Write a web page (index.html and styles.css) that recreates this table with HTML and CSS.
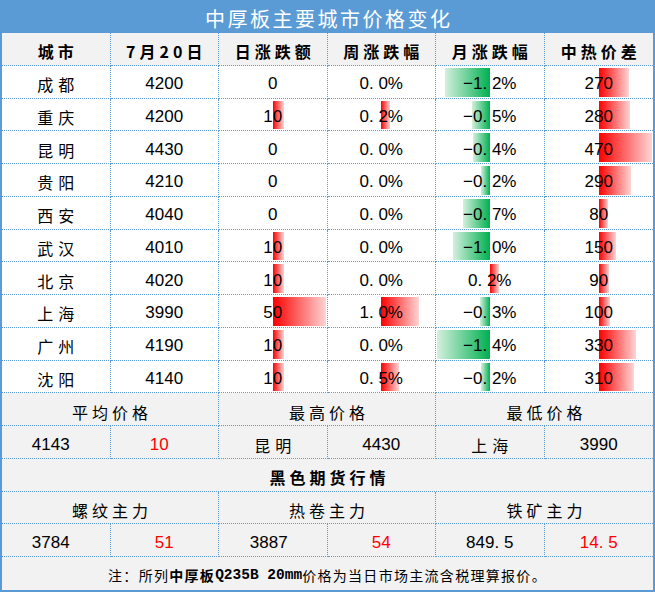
FILE: index.html
```html
<!DOCTYPE html>
<html lang="zh-CN">
<head>
<meta charset="utf-8">
<title>中厚板主要城市价格变化</title>
<link rel="stylesheet" href="styles.css">
</head>
<body>
<div class="sheet">
  <div class="title">中厚板主要城市价格变化</div>
  <div class="grid">
    <div class="c hd">城市</div>
    <div class="c hd">7月20日</div>
    <div class="c hd">日涨跌额</div>
    <div class="c hd">周涨跌幅</div>
    <div class="c hd">月涨跌幅</div>
    <div class="c hd last">中热价差</div>

    <div class="c city">成都</div><div class="c">4200</div>
    <div class="c"><span class="v">0</span></div>
    <div class="c"><span class="v">0. 0%</span></div>
    <div class="c"><i class="bar neg" style="width:45px"></i><span class="v">−1. 2%</span></div>
    <div class="c last"><i class="bar pos" style="width:30px"></i><span class="v">270</span></div>

    <div class="c city">重庆</div><div class="c">4200</div>
    <div class="c"><i class="bar pos" style="width:11px"></i><span class="v">10</span></div>
    <div class="c"><i class="bar pos" style="width:9px"></i><span class="v">0. 2%</span></div>
    <div class="c"><i class="bar neg" style="width:18px"></i><span class="v">−0. 5%</span></div>
    <div class="c last"><i class="bar pos" style="width:31px"></i><span class="v">280</span></div>

    <div class="c city">昆明</div><div class="c">4430</div>
    <div class="c"><span class="v">0</span></div>
    <div class="c"><span class="v">0. 0%</span></div>
    <div class="c"><i class="bar neg" style="width:17px"></i><span class="v">−0. 4%</span></div>
    <div class="c last"><i class="bar pos" style="width:53px"></i><span class="v">470</span></div>

    <div class="c city">贵阳</div><div class="c">4210</div>
    <div class="c"><span class="v">0</span></div>
    <div class="c"><span class="v">0. 0%</span></div>
    <div class="c"><i class="bar neg" style="width:9px"></i><span class="v">−0. 2%</span></div>
    <div class="c last"><i class="bar pos" style="width:32px"></i><span class="v">290</span></div>

    <div class="c city">西安</div><div class="c">4040</div>
    <div class="c"><span class="v">0</span></div>
    <div class="c"><span class="v">0. 0%</span></div>
    <div class="c"><i class="bar neg" style="width:27px"></i><span class="v">−0. 7%</span></div>
    <div class="c last"><i class="bar pos" style="width:9px"></i><span class="v">80</span></div>

    <div class="c city">武汉</div><div class="c">4010</div>
    <div class="c"><i class="bar pos" style="width:11px"></i><span class="v">10</span></div>
    <div class="c"><span class="v">0. 0%</span></div>
    <div class="c"><i class="bar neg" style="width:37px"></i><span class="v">−1. 0%</span></div>
    <div class="c last"><i class="bar pos" style="width:17px"></i><span class="v">150</span></div>

    <div class="c city">北京</div><div class="c">4020</div>
    <div class="c"><i class="bar pos" style="width:11px"></i><span class="v">10</span></div>
    <div class="c"><span class="v">0. 0%</span></div>
    <div class="c"><i class="bar pos" style="width:9px"></i><span class="v">0. 2%</span></div>
    <div class="c last"><i class="bar pos" style="width:10px"></i><span class="v">90</span></div>

    <div class="c city">上海</div><div class="c">3990</div>
    <div class="c"><i class="bar pos" style="width:53px"></i><span class="v">50</span></div>
    <div class="c"><i class="bar pos" style="width:38px"></i><span class="v">1. 0%</span></div>
    <div class="c"><i class="bar neg" style="width:10px"></i><span class="v">−0. 3%</span></div>
    <div class="c last"><i class="bar pos" style="width:11px"></i><span class="v">100</span></div>

    <div class="c city">广州</div><div class="c">4190</div>
    <div class="c"><i class="bar pos" style="width:11px"></i><span class="v">10</span></div>
    <div class="c"><span class="v">0. 0%</span></div>
    <div class="c"><i class="bar neg" style="width:53px"></i><span class="v">−1. 4%</span></div>
    <div class="c last"><i class="bar pos" style="width:37px"></i><span class="v">330</span></div>

    <div class="c city">沈阳</div><div class="c">4140</div>
    <div class="c"><i class="bar pos" style="width:11px"></i><span class="v">10</span></div>
    <div class="c"><i class="bar pos" style="width:18px"></i><span class="v">0. 5%</span></div>
    <div class="c"><i class="bar neg" style="width:9px"></i><span class="v">−0. 2%</span></div>
    <div class="c last"><i class="bar pos" style="width:35px"></i><span class="v">310</span></div>

    <div class="c g lbl span2">平均价格</div>
    <div class="c g lbl span2">最高价格</div>
    <div class="c g lbl span2 last">最低价格</div>

    <div class="c g shift">4143</div>
    <div class="c g red shift">10</div>
    <div class="c g city">昆明</div>
    <div class="c g">4430</div>
    <div class="c g city">上海</div>
    <div class="c g last">3990</div>

    <div class="c g hd span6 last">黑色期货行情</div>

    <div class="c g lbl span2">螺纹主力</div>
    <div class="c g lbl span2">热卷主力</div>
    <div class="c g lbl span2 last">铁矿主力</div>

    <div class="c g shift">3784</div>
    <div class="c g red">51</div>
    <div class="c g shift-s">3887</div>
    <div class="c g red">54</div>
    <div class="c g">849. 5</div>
    <div class="c g red last">14. 5</div>

    <div class="c g note span6 last"><span class="zh">注：所列</span><b class="zh">中厚板</b><b class="mono">Q235B 20mm</b><span class="zh">价格为当日市场主流含税理算报价。</span></div>
  </div>
</div>
</body>
</html>
```
FILE: styles.css
```css
* {
  box-sizing: border-box;
  margin: 0;
  padding: 0;
}

body {
  margin: 0;
  background: #ffffff;
  font-family: "Liberation Sans", "Noto Sans CJK SC", sans-serif;
  color: #000;
}

.sheet {
  width: 655px;
  height: 592px;
  border: 2px solid #5b9bd5;
  border-top: 0;
  display: flex;
  flex-direction: column;
}

.title {
  height: 33px;
  flex: none;
  background: #5b9bd5;
  color: #ffffff;
  font-family: "Noto Sans CJK SC", sans-serif;
  font-size: 20px;
  letter-spacing: 2.5px;
  padding-left: 2.5px;
  padding-top: 3px;
  display: flex;
  align-items: center;
  justify-content: center;
}

.grid {
  flex: 1;
  display: grid;
  grid-template-columns: repeat(6, 1fr);
  grid-auto-rows: 1fr;
}

.c {
  position: relative;
  display: flex;
  align-items: center;
  justify-content: center;
  padding-top: 5px;
  border-right: 1px dotted #5b9bd5;
  border-bottom: 1px dotted #5b9bd5;
  background: #ffffff;
  font-size: 17px;
  white-space: pre;
}

.c.last {
  border-right: 0;
}

.hd {
  background: #f2f2f2;
  font-family: "Noto Sans CJK SC", sans-serif;
  font-weight: bold;
  font-size: 16px;
  letter-spacing: 4px;
  padding-left: 4px;
}

.city {
  font-family: "Noto Sans CJK SC", sans-serif;
  font-size: 16px;
  letter-spacing: 5px;
  padding-left: 5px;
}

.lbl {
  font-family: "Noto Sans CJK SC", sans-serif;
  font-size: 16px;
  letter-spacing: 4px;
  padding-left: 4px;
}

.g {
  background: #f2f2f2;
}

.red {
  color: #ff0000;
}

.shift {
  padding-right: 10px;
}

.shift-s {
  padding-right: 8px;
}

.span2 {
  grid-column: span 2;
}

.span6 {
  grid-column: span 6;
}

.note {
  border-bottom: 0;
  font-size: 14px;
  padding-top: 3px;
}

.note .zh {
  font-family: "Noto Sans CJK SC", sans-serif;
  letter-spacing: 1.3px;
}

.note .mono {
  font-family: "Liberation Mono", monospace;
  font-size: 14.5px;
  letter-spacing: 0;
}

.bar {
  position: absolute;
  top: 2px;
  bottom: 1px;
}

.bar.pos {
  left: 50%;
  background: linear-gradient(90deg, #ff0000, #ffd4d4);
}

.bar.neg {
  right: 50%;
  background: linear-gradient(270deg, #00b050, #d4f0de);
}

.v {
  position: relative;
}
```
